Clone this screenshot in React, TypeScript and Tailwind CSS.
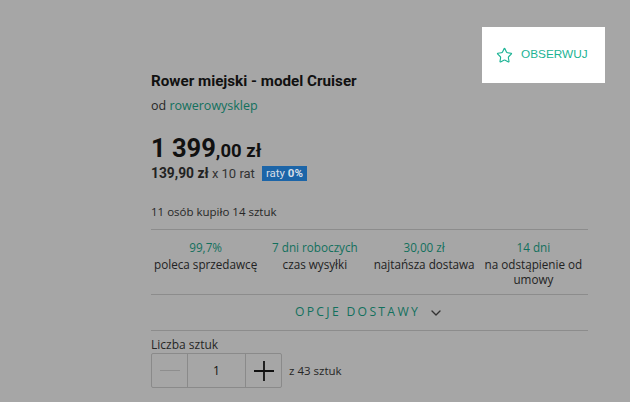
import React from 'react';
import { Star, ChevronDown } from 'lucide-react';

const stats = [
  { value: '99,7%', label: 'poleca sprzedawcę' },
  { value: '7 dni roboczych', label: 'czas wysyłki' },
  { value: '30,00 zł', label: 'najtańsza dostawa' },
  { value: '14 dni', label: 'na odstąpienie od umowy' },
];

const App = () => {
  return (
    <div className="relative h-[402px] w-full overflow-hidden bg-[#a6a6a6] font-['Open_Sans',sans-serif] text-[#262626]">
      {/* podświetlony przycisk obserwuj */}
      <div className="absolute left-[482px] top-[27px] flex h-[56px] w-[123px] items-center gap-x-[8px] bg-white pl-[14px] font-['Liberation_Sans',Arial,sans-serif] text-[11.8px] text-[#1bb394]">
        <Star size={17} strokeWidth={1.6} />
        <span>OBSERWUJ</span>
      </div>

      <div className="ml-[151px] w-[437px] pt-[71px]">
        <h1 className="font-['Roboto',sans-serif] text-[15.2px] font-bold leading-[20px] text-[#111]">
          Rower miejski - model Cruiser
        </h1>
        <p className="mt-[6px] text-[12.5px] leading-[18px]">
          od <span className="text-[#12705d]">rowerowysklep</span>
        </p>

        <div className="mt-[21px] font-['Roboto',sans-serif] leading-[24px] text-[#111]">
          <span className="text-[25.5px] font-bold">1 399</span>
          <span className="text-[18.5px] font-bold">,00 zł</span>
        </div>
        <div className="flex items-center gap-x-[7px] text-[13.8px] leading-[18px]">
          <span className="font-['Roboto',sans-serif]">
            <span className="font-bold text-[#222]">139,90 zł</span>
            <span className="text-[13px] text-[#333]"> x 10 rat</span>
          </span>
          <span className="bg-[#1c65a8] px-[4px] font-['Roboto',sans-serif] text-[11.5px] leading-[15px] text-[#d6dde6]">
            raty <span className="font-bold">0%</span>
          </span>
        </div>

        <p className="mt-[21px] text-[11.5px] leading-[16px]">11 osób kupiło 14 sztuk</p>

        <div className="mt-[9px] grid grid-cols-4 border-y border-[#8c8c8c] pb-[7px] pt-[10px] text-center text-[11.7px] leading-[15px]">
          {stats.map((s, i) => (
            <div key={s.value}>
              <div className="text-[#12705d]">{s.value}</div>
              <div className={i < 3 ? 'mt-[2px] whitespace-nowrap text-[#222]' : 'mt-[2px] px-[4px] text-[#222]'}>
                {s.label}
              </div>
            </div>
          ))}
        </div>

        <div className="flex h-[36px] items-center justify-center gap-x-[8px] border-b border-[#8c8c8c] text-[12.2px] tracking-[2.3px] text-[#12705d]">
          <span>OPCJE DOSTAWY</span>
          <ChevronDown size={16} strokeWidth={2} className="text-[#333]" />
        </div>

        <p className="mt-[6px] text-[12px] leading-[16px]">Liczba sztuk</p>
        <div className="flex items-center gap-x-[7px]">
          <div className="flex h-[35px] overflow-hidden rounded-[2px] border border-[#8a8a8a]">
            <div className="flex w-[36px] items-center justify-center border-r border-[#8a8a8a]">
              <div className="h-[1px] w-[20px] bg-[#8e8e8e]" />
            </div>
            <div className="flex w-[57px] items-center justify-center text-[12px] text-[#111]">1</div>
            <div className="flex w-[36px] items-center justify-center border-l border-[#8a8a8a]">
              <svg width="22" height="22" viewBox="0 0 22 22" fill="none" stroke="#111" strokeWidth="1.8">
                <path d="M11 1v20M1 11h20" />
              </svg>
            </div>
          </div>
          <span className="text-[11.5px]">z 43 sztuk</span>
        </div>
      </div>
    </div>
  );
};

export default App;
